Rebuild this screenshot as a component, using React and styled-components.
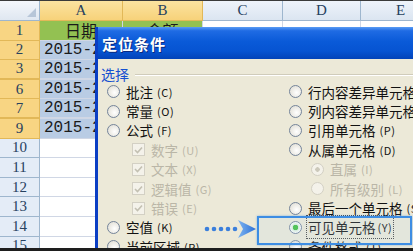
import React from "react";
import styled, { createGlobalStyle } from "styled-components";

const GlobalStyle = createGlobalStyle`
  html, body {
    margin: 0;
    padding: 0;
    background: #ffffff;
  }
`;

const Stage = styled.div`
  position: relative;
  width: 413px;
  height: 251px;
  overflow: hidden;
  border-top: 1px solid #3a3a3a;
  border-bottom: 3px solid #1e1e1e;
  box-sizing: border-box;
  font-family: "Liberation Serif", "Noto Sans CJK SC", serif;
`;

const Sheet = styled.div`
  display: grid;
  grid-template-columns: 40px 83px 80px 80px 78px 80px;
  grid-template-rows: 20px;
  grid-auto-rows: 19.6px;
`;

const Corner = styled.div`
  background: linear-gradient(#f4f7fb, #dfe7f1);
  border-right: 1px solid #9eb6ce;
  border-bottom: 1px solid #9eb6ce;
  position: relative;
  &::after {
    content: "";
    position: absolute;
    right: 3px;
    bottom: 3px;
    border-left: 9px solid transparent;
    border-bottom: 9px solid #b7c6d8;
  }
`;

const ColHead = styled.div`
  display: flex;
  align-items: center;
  justify-content: center;
  font-size: 15px;
  color: #27415f;
  background: ${p => (p.$sel ? "linear-gradient(#fbe3a0, #f7d27a)" : "linear-gradient(#eef3fa, #dbe5f1)")};
  border-right: 1px solid ${p => (p.$sel ? "#e2b858" : "#9eb6ce")};
  border-bottom: 1px solid ${p => (p.$sel ? "#e2b858" : "#9eb6ce")};
`;

const RowHead = styled.div`
  display: flex;
  align-items: center;
  justify-content: center;
  font-size: 15px;
  color: #27415f;
  background: ${p => (p.$sel ? "#f8d583" : "#e4ecf7")};
  border-right: 1px solid ${p => (p.$sel ? "#e2b858" : "#9eb6ce")};
  border-bottom: ${p => (p.$gap ? "2px" : "1px")} solid ${p => (p.$sel ? "#e2b858" : "#9eb6ce")};
  box-sizing: border-box;
`;

const Cell = styled.div`
  display: flex;
  align-items: center;
  justify-content: ${p => (p.$center ? "center" : "flex-start")};
  padding-left: ${p => (p.$center ? "0" : "4px")};
  font-family: ${p => (p.$center ? '"Noto Sans CJK SC", sans-serif' : '"Liberation Mono", monospace')};
  font-size: 16px;
  line-height: 1;
  color: #1a1a1a;
  white-space: nowrap;
  overflow: hidden;
  box-sizing: border-box;
  background: ${p => p.$bg || "#ffffff"};
  border-right: 1px solid #d0d7e5;
  border-bottom: ${p => (p.$gap ? "2px" : "1px")} solid #d0d7e5;
`;

const Dialog = styled.div`
  position: absolute;
  left: 95px;
  top: 26px;
  width: 340px;
  height: 240px;
  background: #ece9d8;
  border-left: 3px solid #0b3fc4;
  box-sizing: border-box;
  font-family: "Noto Sans CJK SC", "Noto Sans", sans-serif;
`;

const TitleBar = styled.div`
  height: 32px;
  display: flex;
  align-items: center;
  padding-left: 4px;
  color: #ffffff;
  font-weight: bold;
  font-size: 15px;
  letter-spacing: 1px;
  background: linear-gradient(#5a9cf4 0%, #1f6be4 12%, #0a5ad8 45%, #0654d2 75%, #0243b8 100%);
  text-shadow: 1px 1px 0 #0a2a80;
`;

const Body = styled.div`
  padding: 5px 0 0 3px;
`;

const GroupLabel = styled.div`
  display: flex;
  align-items: center;
  gap: 6px;
  color: #1550d0;
  font-size: 14px;
  height: 20px;
  &::after {
    content: "";
    flex: 1;
    border-top: 1px solid #d0ccbb;
    box-shadow: 0 1px 0 #ffffff;
    margin-top: 1px;
  }
`;

const Columns = styled.div`
  display: grid;
  grid-template-columns: 182px 1fr;
  margin-top: -2px;
`;

const Col = styled.div`
  display: flex;
  flex-direction: column;
`;

const Option = styled.div`
  height: 19.4px;
  display: flex;
  align-items: center;
  gap: 6px;
  padding-left: ${p => p.$indent || "6px"};
  font-size: 13.5px;
  white-space: nowrap;
  color: ${p => (p.$off ? "#bab6a7" : "#111111")};
`;

const Radio = styled.span`
  width: 13px;
  height: 13px;
  border-radius: 50%;
  flex: none;
  box-sizing: border-box;
  border: 1px solid ${p => (p.$off ? "#d3d0c4" : "#74849a")};
  background: ${p =>
    p.$on
      ? "radial-gradient(circle, #3cbf3c 0 2.5px, #d9f0d9 3px, #ffffff 5.5px)"
      : p.$dot
      ? "radial-gradient(circle, #ccc9bb 0 2px, #f4f2ea 2.5px)"
      : p.$off
      ? "#f4f2ea"
      : "radial-gradient(circle at 60% 60%, #ffffff, #dcd9ce)"};
`;

const Check = styled.span`
  width: 13px;
  height: 13px;
  flex: none;
  box-sizing: border-box;
  border: 1px solid #d3d0c4;
  background: #f4f2ea;
  display: flex;
  align-items: center;
  justify-content: center;
`;

const Key = styled.span`
  font-size: 11px;
  margin-left: -2px;
  letter-spacing: 0.5px;
`;

const Focus = styled.span`
  display: inline-flex;
  align-items: center;
  gap: 4px;
  outline: 1px dotted #444;
  outline-offset: 1px;
`;

const Highlight = styled.div`
  position: absolute;
  left: 257px;
  top: 215px;
  width: 155px;
  height: 29px;
  box-sizing: border-box;
  border: 2px solid #3d8de3;
  background: rgba(190, 215, 240, 0.18);
  box-shadow: 0 0 2px rgba(61, 141, 227, 0.6);
`;

const Arrow = styled.svg`
  position: absolute;
  left: 203px;
  top: 218px;
`;

const cols = [
  { k: "A", sel: true },
  { k: "B", sel: true },
  { k: "C" },
  { k: "D" },
  { k: "E" },
];

const rows = [
  { n: "1", sel: true, a: "日期", b: "金额", head: true },
  { n: "2", sel: true, a: "2015-2" },
  { n: "3", sel: true, a: "2015-2", gap: true },
  { n: "6", sel: true, a: "2015-2" },
  { n: "7", sel: true, a: "2015-2", gap: true },
  { n: "9", sel: true, a: "2015-2" },
  { n: "10" },
  { n: "11" },
  { n: "12" },
  { n: "13" },
  { n: "14" },
  { n: "15" },
];

const leftOpts = [
  { t: "批注", k: "C" },
  { t: "常量", k: "O" },
  { t: "公式", k: "F" },
  { t: "数字", k: "U", check: true },
  { t: "文本", k: "X", check: true },
  { t: "逻辑值", k: "G", check: true },
  { t: "错误", k: "E", check: true },
  { t: "空值", k: "K" },
  { t: "当前区域", k: "R" },
];

const rightOpts = [
  { t: "行内容差异单元格", k: "W" },
  { t: "列内容差异单元格", k: "M" },
  { t: "引用单元格", k: "P" },
  { t: "从属单元格", k: "D" },
  { t: "直属", k: "I", sub: true, dot: true },
  { t: "所有级别", k: "L", sub: true },
  { t: "最后一个单元格", k: "S" },
  { t: "可见单元格", k: "Y", on: true },
  { t: "条件格式", k: "T" },
];

const Tick = () => (
  <svg width="9" height="8" viewBox="0 0 9 8">
    <path d="M1 4 L3.5 6.5 L8 1.5" fill="none" stroke="#c3c0b2" strokeWidth="1.6" />
  </svg>
);

const renderOpt = o => {
  if (o.check) {
    return (
      <Option key={o.t} $indent="31px" $off>
        <Check>
          <Tick />
        </Check>
        {o.t}
        <Key>({o.k})</Key>
      </Option>
    );
  }
  if (o.on) {
    return (
      <Option key={o.t}>
        <Radio $on />
        <Focus>
          {o.t}
          <Key>({o.k})</Key>
        </Focus>
      </Option>
    );
  }
  return (
    <Option key={o.t} $indent={o.sub ? "28px" : undefined} $off={o.sub}>
      <Radio $off={o.sub} $dot={o.dot} />
      {o.t}
      <Key>({o.k})</Key>
    </Option>
  );
};

export default function App() {
  return (
    <>
      <GlobalStyle />
      <Stage>
        <Sheet>
          <Corner />
          {cols.map(c => (
            <ColHead key={c.k} $sel={c.sel}>
              {c.k}
            </ColHead>
          ))}
          {rows.map(r => (
            <React.Fragment key={r.n}>
              <RowHead $sel={r.sel} $gap={r.gap}>
                {r.n}
              </RowHead>
              <Cell $center={r.head} $gap={r.gap} $bg={r.head ? "#93c152" : r.sel ? "#b9cce4" : undefined}>
                {r.a}
              </Cell>
              <Cell $center={r.head} $gap={r.gap} $bg={r.head ? "#93c152" : undefined}>
                {r.b}
              </Cell>
              <Cell $gap={r.gap} />
              <Cell $gap={r.gap} />
              <Cell $gap={r.gap} />
            </React.Fragment>
          ))}
        </Sheet>

        <Dialog>
          <TitleBar>定位条件</TitleBar>
          <Body>
            <GroupLabel>选择</GroupLabel>
            <Columns>
              <Col>{leftOpts.map(renderOpt)}</Col>
              <Col>{rightOpts.map(renderOpt)}</Col>
            </Columns>
          </Body>
        </Dialog>

        <Highlight />
        <Arrow width="56" height="20" viewBox="0 0 56 20">
          <defs>
            <linearGradient id="ah" x1="0" y1="0" x2="1" y2="0">
              <stop offset="0" stopColor="#7fb4f0" />
              <stop offset="1" stopColor="#2a6fd6" />
            </linearGradient>
          </defs>
          {[4, 11, 18, 25, 32].map(x => (
            <circle key={x} cx={x} cy="10" r="2.3" fill="#3b7fdc" />
          ))}
          <polygon points="35,1 53,10 35,19 40,10" fill="url(#ah)" />
        </Arrow>
      </Stage>
    </>
  );
}
